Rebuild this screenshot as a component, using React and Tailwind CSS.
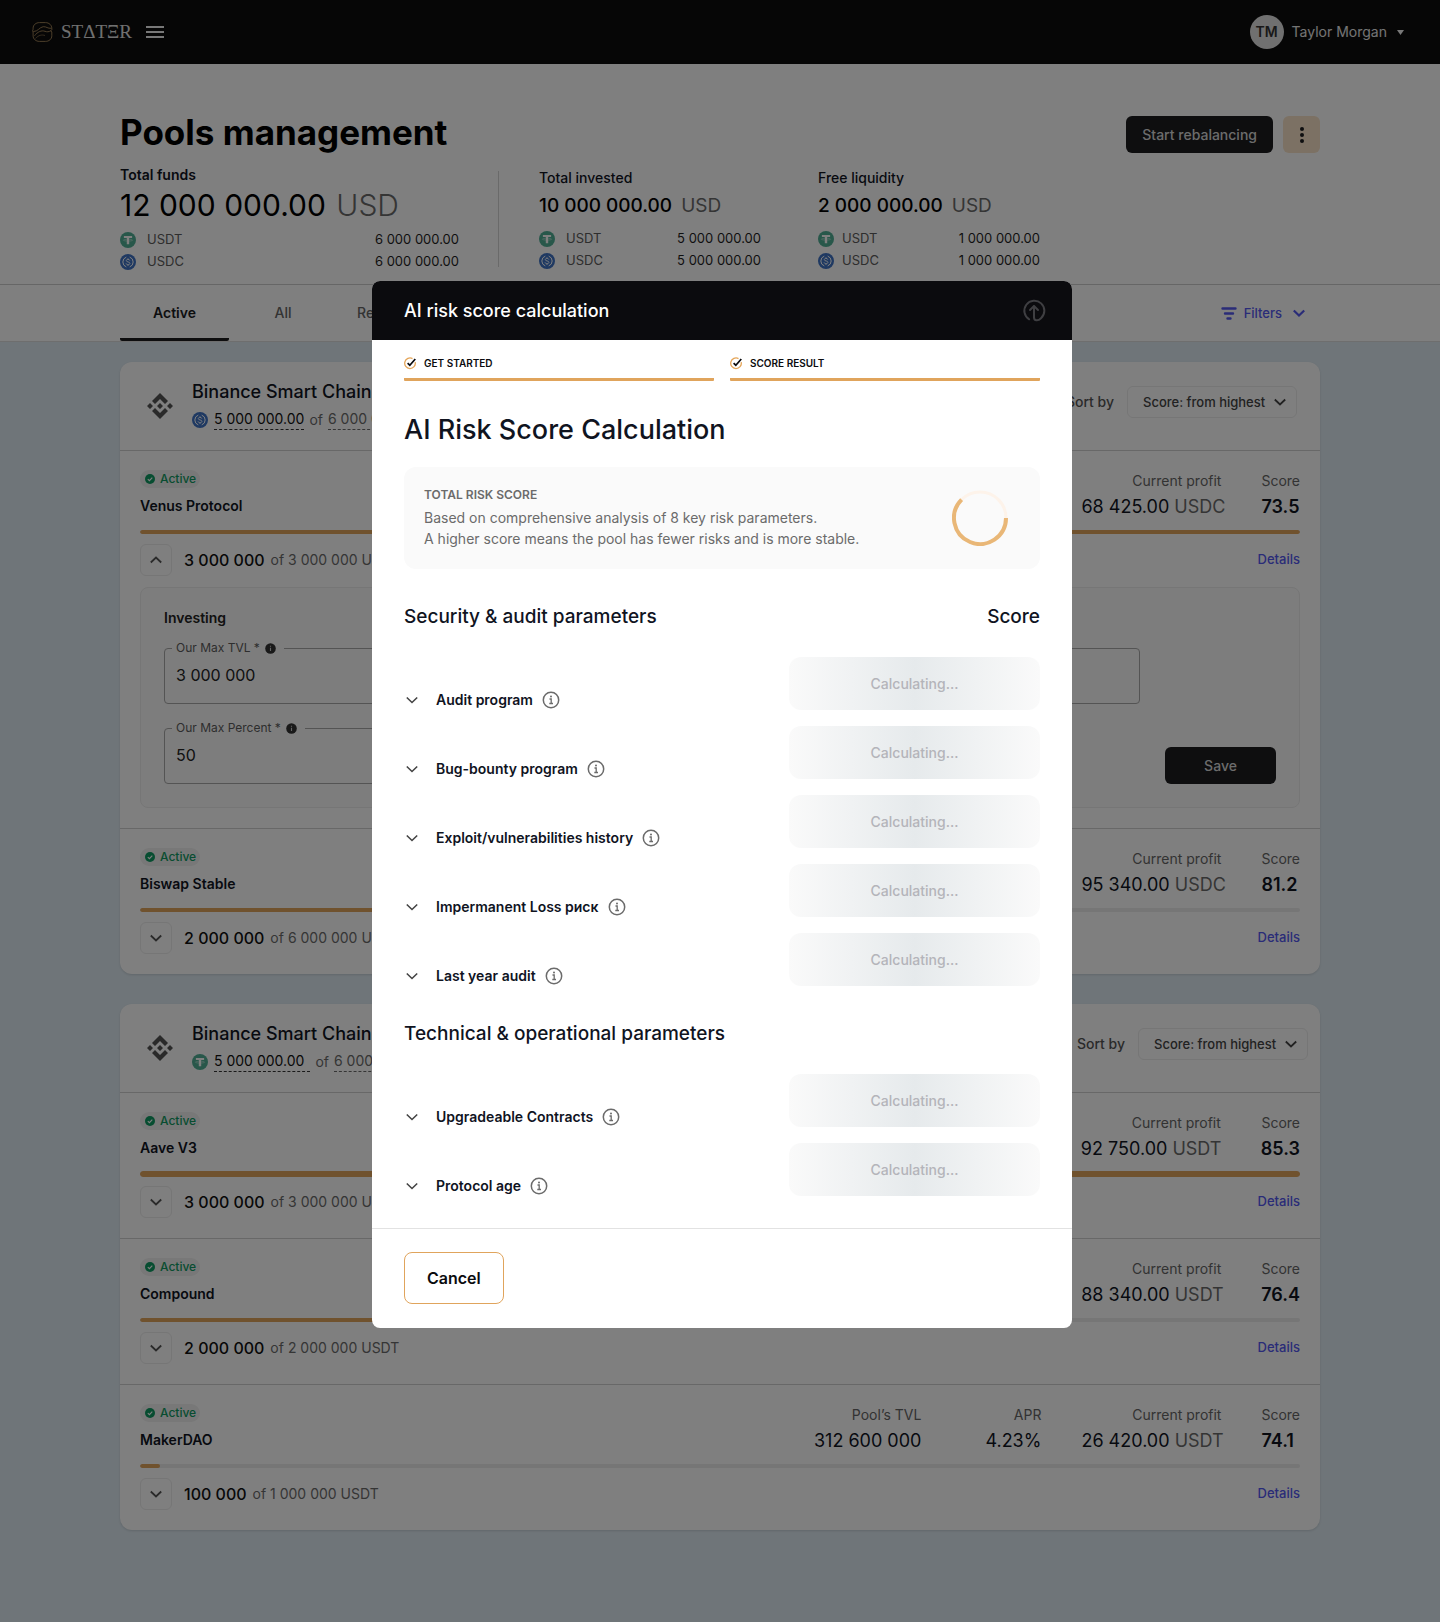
import React, { useState } from 'react';

// ---------- Icons ----------

const ChevronIcon = ({ size = 16, up = false, weight = 1.8, className = '' }) => (
  <svg width={size} height={size} viewBox="0 0 16 16" fill="none" className={className} aria-hidden="true">
    <path d={up ? 'M2.800 10.500 8 5.500l5.200 5' : 'M2.800 5.500l5.200 5 5.200-5'} stroke="currentColor" strokeWidth={weight} />
  </svg>
);

const UsdtIcon = () => (
  <svg width="16" height="16" viewBox="0 0 16 16" className="shrink-0" aria-hidden="true">
    <circle cx="8" cy="8" r="8" fill="#50af95" />
    <path d="M3.900 3.900h8.200v2.200H9.200v6.200H6.800V6.100H3.900z" fill="#fff" />
    <path d="M6.600 7.400c-1.900.1-3.200.4-3.200.8s1.900.9 4.600.9 4.600-.4 4.600-.9-1.300-.7-3.200-.8" stroke="#fff" strokeWidth=".4" fill="none" />
  </svg>
);

const UsdcIcon = () => (
  <svg width="16" height="16" viewBox="0 0 16 16" fill="none" className="shrink-0" aria-hidden="true">
    <circle cx="8" cy="8" r="8" fill="#3e73c4" />
    <path d="M6.300 3.100a5.200 5.200 0 0 0 0 9.800M9.700 3.100a5.200 5.200 0 0 1 0 9.800" stroke="#fff" />
    <path
      d="M9.800 6.600c-.1-.8-.8-1.200-1.800-1.200s-1.700.4-1.700 1.200c0 1.900 3.600.8 3.600 2.800 0 .8-.8 1.300-1.900 1.300s-1.800-.5-1.900-1.300M8 4.300v1.100M8 10.700v1.100"
      stroke="#fff"
      strokeWidth=".9"
    />
  </svg>
);

const BinanceIcon = () => (
  <svg width="26" height="26" viewBox="0 0 26 26" fill="#555" className="shrink-0" aria-hidden="true">
    <path d="M13 0 21 8l-3 3-5-5-5 5-3-3z" />
    <path d="M13 26 21 18l-3-3-5 5-5-5-3 3z" />
    <path d="M3 10l3 3-3 3-3-3zM23 10l3 3-3 3-3-3zM13 10l3 3-3 3-3-3z" />
  </svg>
);

const LogoIcon = () => (
  <svg width="21" height="20" viewBox="0 0 21 20" fill="none" stroke="#a98a5c" strokeWidth=".9" aria-hidden="true">
    <path d="M7.500.6h6c3.700 0 6.300 2.700 6.300 5.600v1.600l-1 1 1 1.200v3.800c0 3.300-2.800 5.600-6.300 5.600h-6c-3.800 0-6.400-2.500-6.400-5.600V10L.6 8.800l.5-1.500V6.200C1.100 3 3.800.6 7.500.6z" />
    <path d="M1.400 9.500c4.500.2 6-4.300 9.800-4.800 3.200-.3 4.300 2 8.300 1.600" />
    <path d="M2.500 13.800c3-4 7-5.800 10.500-4.500 2.300.8 3.500.6 6-.6" />
    <path d="M3.500 16.500c3-3.500 6.500-4 9.500-3" strokeWidth=".6" />
  </svg>
);

const InfoIcon = () => (
  <svg width="18" height="18" viewBox="0 0 18 18" fill="none" stroke="#6b6b6b" aria-hidden="true">
    <circle cx="9" cy="9" r="7.700" strokeWidth="1.500" />
    <path d="M7.500 8h1.700v4.500M7.300 12.500h3.700" strokeWidth="1.300" />
    <circle cx="9" cy="5.400" r="1" fill="#6b6b6b" stroke="none" />
  </svg>
);

const InfoDot = () => (
  <svg width="11" height="11" viewBox="0 0 11 11" aria-hidden="true">
    <circle cx="5.500" cy="5.500" r="5.300" fill="#333" />
    <path d="M5.500 4.800v3.200M5.500 2.700v1.100" stroke="#ccc" strokeWidth="1.100" />
  </svg>
);

const StepIcon = () => (
  <svg width="13" height="13" viewBox="0 0 13 13" fill="none" aria-hidden="true">
    <path d="M11.200 5.200A5.300 5.300 0 1 1 8.500 1.600" stroke="#e5a65a" strokeWidth="1.300" />
    <path d="M3.600 6.200l2.200 2L11.300 2" stroke="#0b0b0e" strokeWidth="1.700" />
  </svg>
);

const CollapseIcon = () => (
  <svg width="24" height="24" viewBox="0 0 24 24" fill="none" stroke="#3f3f42" strokeWidth="2" strokeLinecap="round" strokeLinejoin="round" aria-hidden="true">
    <path d="M7.200 20.300A10 10 0 1 1 19 19.200c-3 3.200-7 2.800-7-1V7.500" />
    <path d="M8 11l4-4 4 4" />
  </svg>
);

// ---------- Data ----------

const chains = [
  {
    id: 'bsc-usdc',
    token: 'USDC',
    used: '5 000 000.00',
    total: '6 000 000.00',
    pools: [
      { name: 'Venus Protocol', profit: '68 425.00', score: '73.5', filled: '3 000 000', limit: '3 000 000', progress: 100, open: true },
      { name: 'Biswap Stable', profit: '95 340.00', score: '81.2', filled: '2 000 000', limit: '6 000 000', progress: 33 }
    ]
  },
  {
    id: 'bsc-usdt',
    token: 'USDT',
    used: '5 000 000.00',
    total: '6 000 000.00',
    wide: true,
    pools: [
      { name: 'Aave V3', profit: '92 750.00', score: '85.3', filled: '3 000 000', limit: '3 000 000', progress: 100, thick: true },
      { name: 'Compound', profit: '88 340.00', score: '76.4', filled: '2 000 000', limit: '2 000 000', progress: 50 },
      { name: 'MakerDAO', tvl: '312 600 000', apr: '4.23%', profit: '26 420.00', score: '74.1', filled: '100 000', limit: '1 000 000', progress: 1.7 }
    ]
  }
];

const securityParams = [
  'Audit program',
  'Bug-bounty program',
  'Exploit/vulnerabilities history',
  'Impermanent Loss риск',
  'Last year audit'
];

const technicalParams = ['Upgradeable Contracts', 'Protocol age'];

// ---------- Page ----------

const TopBar = () => (
  <header className="flex h-16 items-center justify-between bg-[#0c0c0c] px-8 text-[#f5f5f5]">
    <div className="flex items-center">
      <a href="#home" className="flex items-center gap-2">
        <LogoIcon />
        <span className="font-['Liberation_Serif',serif] text-[19px] leading-6 text-[#e0e0e0]">STΔTΞR</span>
      </a>
      <button type="button" aria-label="Menu" className="ml-[14px] flex h-3 w-[18px] flex-col justify-between">
        <span className="h-[2px] w-full bg-[#f0f0f0]" />
        <span className="h-[2px] w-full bg-[#f0f0f0]" />
        <span className="h-[2px] w-full bg-[#f0f0f0]" />
      </button>
    </div>
    <button type="button" className="flex items-center text-sm">
      <span className="flex h-[34px] w-[34px] items-center justify-center rounded-full bg-[#e0e0e0] font-semibold text-[#333]">TM</span>
      <span className="ml-2 text-[#e8e8e8]">Taylor Morgan</span>
      <svg width="7" height="5" viewBox="0 0 7 5" fill="#f0f0f0" className="mr-1 ml-[10px]" aria-hidden="true">
        <path d="M0 0h7L3.500 5z" />
      </svg>
    </button>
  </header>
);

const TokenRow = ({ token, value, tight }) => (
  <div className={`flex h-[22px] items-center text-[13px] ${tight ? 'gap-2' : 'gap-[11px]'}`}>
    {token === 'USDT' ? <UsdtIcon /> : <UsdcIcon />}
    <span className="text-[#5c5c5c]">{token}</span>
    <span className="ml-auto text-[#1f1f1f]">{value}</span>
  </div>
);

const Stat = ({ label, value, each, tight }) => (
  <div className="w-[222px] pt-[3px]">
    <p className="text-sm font-medium text-[#10141f]">{label}</p>
    <p className="mt-1 mb-2 text-[19px] leading-7 font-medium text-black">
      {value} <span className="ml-1 font-normal text-[#6b6b6b]">USD</span>
    </p>
    <TokenRow token="USDT" value={each} tight={tight} />
    <TokenRow token="USDC" value={each} tight={tight} />
  </div>
);

const PageHead = () => (
  <section className="border-b border-[#ccc] bg-white px-8 pt-12 pb-[11px]">
    <div className="mx-auto max-w-[1200px]">
      <div className="flex items-end justify-between">
        <h1 className="text-[35px] leading-[41px] font-bold text-black">Pools management</h1>
        <div className="flex gap-[10px]">
          <button type="button" className="h-[37px] rounded-md bg-[#1c1c1f] px-4 text-sm font-medium text-[#d8d8d8]">
            Start rebalancing
          </button>
          <button type="button" aria-label="More" className="flex h-[37px] w-[37px] items-center justify-center rounded-md bg-[#f8e3c8]">
            <svg width="4" height="16" viewBox="0 0 4 16" fill="#1c1c1f" aria-hidden="true">
              <circle cx="2" cy="2" r="2" />
              <circle cx="2" cy="8" r="2" />
              <circle cx="2" cy="14" r="2" />
            </svg>
          </button>
        </div>
      </div>
      <div className="mt-3 flex">
        <div className="w-[339px]">
          <p className="text-sm font-semibold text-[#10141f]">Total funds</p>
          <p className="mb-1 text-[30px] leading-10 text-black">
            12 000 000.00 <span className="ml-[2px] font-light text-[#6b6b6b]">USD</span>
          </p>
          <TokenRow token="USDT" value="6 000 000.00" />
          <TokenRow token="USDC" value="6 000 000.00" />
        </div>
        <div className="my-[6px] mr-10 ml-[39px] border-l border-[#d5d5d5]" />
        <div className="flex gap-[57px]">
          <Stat label="Total invested" value="10 000 000.00" each="5 000 000.00" />
          <Stat label="Free liquidity" value="2 000 000.00" each="1 000 000.00" tight />
        </div>
      </div>
    </div>
  </section>
);

const Tabs = () => (
  <nav className="border-b border-[#ddd] bg-white px-8">
    <div className="mx-auto flex h-14 max-w-[1200px] text-sm font-medium text-[#666]">
      <button type="button" className="w-[109px] rounded-b-[2px] border-b-[3px] border-[#1c1c1f] pt-[3px] font-semibold text-[#1c1c1f]">Active</button>
      <button type="button" className="w-[108px]">All</button>
      <button type="button" className="px-5">Rebalanced</button>
      <button type="button" className="mr-[13px] ml-auto flex items-center gap-[7px] text-[13px] text-[#5458f0]">
        <svg width="16" height="13" viewBox="0 0 16 13" stroke="currentColor" strokeWidth="2.400" strokeLinecap="round" aria-hidden="true">
          <path d="M1.500 1.500h13M4 6.500h8M6.500 11.500h3" />
        </svg>
        Filters
        <ChevronIcon weight={2.2} className="ml-[2px]" />
      </button>
    </div>
  </nav>
);

const Metric = ({ label, className = '', children }) => (
  <div className={className}>
    <p className="text-right text-sm text-[#666]">{label}</p>
    <p className="mt-1 text-lg leading-6 whitespace-nowrap text-[#10141f]">{children}</p>
  </div>
);

const Field = ({ id, label, value, className = '' }) => (
  <fieldset className={`rounded-[4px] border border-[#a8a8a8] pb-4 ${className}`}>
    <legend className="ml-[7px] flex h-4 items-center gap-[5px] pr-2 pl-1">
      <label htmlFor={id} className="text-xs text-[#5c5c5c]">{label} *</label>
      <InfoDot />
    </legend>
    <input id={id} type="text" defaultValue={value} className="mt-[7px] block h-6 w-full bg-transparent px-[11px] text-base text-[#222] outline-none" />
  </fieldset>
);

const InvestingForm = () => (
  <form className="mt-[11px] rounded-lg border border-[#ececec] bg-[#fafafa] px-[23px] pt-5 pb-[23px]" onSubmit={(e) => e.preventDefault()}>
    <h4 className="mb-3 text-sm font-semibold text-[#222]">Investing</h4>
    <div className="mr-34 mb-4">
      <Field id="max-tvl" label="Our Max TVL" value="3 000 000" />
    </div>
    <div className="flex items-end justify-between">
      <Field id="max-percent" label="Our Max Percent" value="50" className="w-[476px]" />
      <button type="submit" className="h-[37px] w-[111px] rounded-md bg-[#1c1c1f] text-sm font-medium text-[#d8d8d8]">Save</button>
    </div>
  </form>
);

const PoolRow = ({ pool, token }) => {
  const [open, setOpen] = useState(Boolean(pool.open));

  return (
    <li className="border-t border-[#d0d0d0] px-5 pt-[19px] pb-5">
      <div className="flex items-start justify-between">
        <div>
          <span className="flex h-[18px] w-[60px] items-center gap-[5px] rounded-full bg-[#f0f0f0] pl-[5px] text-xs font-medium text-[#0f9a62]">
            <svg width="10" height="10" viewBox="0 0 10 10" fill="none" aria-hidden="true">
              <circle cx="5" cy="5" r="5" fill="#0f9a62" />
              <path d="M2.800 5.200l1.600 1.500 2.900-3.100" stroke="#fff" strokeWidth="1.100" />
            </svg>
            Active
          </span>
          <h3 className="mt-2 text-sm font-semibold text-[#10141f]">{pool.name}</h3>
        </div>
        <div className="flex gap-10 pt-px">
          {pool.tvl && <Metric label="Pool’s TVL">{pool.tvl}</Metric>}
          {pool.apr && <Metric label="APR" className="w-20 text-right">{pool.apr}</Metric>}
          <Metric label="Current profit" className="w-[140px]">
            {pool.profit} <span className="text-[#6b6b6b]">{token}</span>
          </Metric>
          <Metric label="Score">
            <span className="font-semibold">{pool.score}</span>
          </Metric>
        </div>
      </div>
      <div className="mt-[10px] flex h-[6px] items-center">
        <div className={`w-full overflow-hidden rounded-full bg-[#ececec] ${pool.thick ? 'h-[6px]' : 'h-1'}`}>
          <div className="h-full rounded-full bg-[#e0a45c]" style={{ width: `${pool.progress}%` }} />
        </div>
      </div>
      <div className="mt-[9px] flex items-center">
        <button
          type="button"
          aria-label={open ? 'Collapse' : 'Expand'}
          onClick={() => setOpen(!open)}
          className="flex h-8 w-8 items-center justify-center rounded-md border border-[#ececec] text-[#555]"
        >
          <ChevronIcon up={open} />
        </button>
        <span className="ml-3 text-base font-medium text-[#111]">{pool.filled}</span>
        <span className="ml-[6px] text-sm text-[#6b6b6b]">of {pool.limit} {token}</span>
        <a href="#details" className="ml-auto text-[13px] font-medium text-[#5458f0]">Details</a>
      </div>
      {open && <InvestingForm />}
    </li>
  );
};

const ChainCard = ({ chain }) => (
  <section className="overflow-hidden rounded-xl bg-white shadow-sm">
    <div className={`flex h-[88px] items-start pl-[27px] ${chain.wide ? 'pr-3' : 'pr-[23px]'}`}>
      <div className="flex h-full items-center">
        <BinanceIcon />
      </div>
      <div className="ml-[19px] pt-4">
        <h2 className="text-lg font-medium text-[#10141f]">Binance Smart Chain</h2>
        <p className="mt-[3px] flex items-center text-sm text-[#6b6b6b]">
          {chain.token === 'USDT' ? <UsdtIcon /> : <UsdcIcon />}
          <span className={`ml-[6px] border-b border-dashed border-[#333] text-[#111] ${chain.wide ? 'pr-[6px]' : ''}`}>{chain.used}</span>
          <span className="mx-[5px]">of</span>
          <span className="border-b border-dashed border-[#6b6b6b]">{chain.total}</span>
        </p>
      </div>
      <div className="ml-auto flex items-center pt-6 text-sm font-medium text-[#555]">
        <label htmlFor={`sort-${chain.id}`}>Sort by</label>
        <div className="relative ml-[13px]">
          <select id={`sort-${chain.id}`} className="h-8 w-[170px] appearance-none rounded-md border border-[#ececec] bg-white pl-[15px] text-[13px] text-[#444]">
            <option>Score: from highest</option>
          </select>
          <ChevronIcon className="pointer-events-none absolute top-2 right-[9px] text-[#444]" />
        </div>
      </div>
    </div>
    <ul>
      {chain.pools.map((pool) => (
        <PoolRow key={pool.name} pool={pool} token={chain.token} />
      ))}
    </ul>
  </section>
);

// ---------- Modal ----------

const Step = ({ label }) => (
  <li className="flex-1 rounded-[1px] border-b-[3px] border-[#e0a45c] pb-[7px]">
    <span className="flex h-4 items-center gap-[7px] text-[10px] font-semibold text-[#0b0b0e]">
      <StepIcon />
      {label}
    </span>
  </li>
);

const ParamList = ({ items }) => (
  <ul className="mt-[26px] space-y-4">
    {items.map((name) => (
      <li key={name} className="flex items-end justify-between">
        <div className="flex items-center">
          <button type="button" aria-label={`Show ${name}`} className="text-[#444]">
            <ChevronIcon weight={1.6} />
          </button>
          <span className="ml-4 text-sm font-semibold text-[#10141f]">{name}</span>
          <button type="button" aria-label={`About ${name}`} className="ml-[9px]">
            <InfoIcon />
          </button>
        </div>
        <div className="flex h-[53px] w-[251px] items-center justify-center rounded-xl bg-linear-to-r from-[#fafafa] via-[#e6eaec] to-[#fafafa] text-sm font-medium text-[#b4b4ba]">
          Calculating...
        </div>
      </li>
    ))}
  </ul>
);

const ScoreModal = () => (
  <div role="dialog" aria-labelledby="modal-title" className="ml-1 w-[700px] max-w-full overflow-hidden rounded-lg bg-white">
    <div className="flex h-[59px] items-center justify-between bg-[#0b0b0e] pr-[26px] pl-8">
      <h2 id="modal-title" className="text-lg font-medium text-white">AI risk score calculation</h2>
      <button type="button" aria-label="Collapse">
        <CollapseIcon />
      </button>
    </div>
    <div className="px-8 pt-[15px] pb-8">
      <ol className="flex gap-4">
        <Step label="GET STARTED" />
        <Step label="SCORE RESULT" />
      </ol>
      <h3 className="mt-[31px] text-[27px] leading-9 font-medium text-[#10141f]">AI Risk Score Calculation</h3>
      <div className="mt-[19px] flex h-[102px] items-center justify-between rounded-xl bg-[#fafafa] pr-8 pl-5">
        <div className="pb-[2px] text-[#6b6b6b]">
          <h4 className="mb-[2px] text-xs leading-5 font-semibold">TOTAL RISK SCORE</h4>
          <p className="text-sm leading-[21px]">
            Based on comprehensive analysis of 8 key risk parameters.
            <br />
            A higher score means the pool has fewer risks and is more stable.
          </p>
        </div>
        <svg width="56" height="56" viewBox="0 0 56 56" fill="none" strokeWidth="4" aria-hidden="true">
          <circle cx="28" cy="28" r="26" stroke="#fdf3ea" strokeWidth="3" />
          <path d="M54 28A26 26 0 1 1 9.600 9.600" stroke="#e9b777" />
        </svg>
      </div>
      <div className="mt-[34px] flex justify-between text-[19px] leading-7 font-medium text-[#10141f]">
        <h4>Security &amp; audit parameters</h4>
        <span>Score</span>
      </div>
      <ParamList items={securityParams} />
      <h4 className="mt-[34px] text-[19px] leading-7 font-medium text-[#10141f]">Technical &amp; operational parameters</h4>
      <ParamList items={technicalParams} />
    </div>
    <div className="border-t border-[#e2e2e2] px-8 pt-[23px] pb-6">
      <button type="button" className="h-[52px] rounded-lg border border-[#e0a45c] px-[22px] text-base font-semibold text-[#0b0b0e]">
        Cancel
      </button>
    </div>
  </div>
);

const App = () => (
  <div className="relative min-h-screen bg-[#dfebf3] font-['Inter',sans-serif]">
    <TopBar />
    <PageHead />
    <Tabs />
    <main className="px-8 pt-5 pb-[92px]">
      <div className="mx-auto max-w-[1200px] space-y-[30px]">
        {chains.map((chain) => (
          <ChainCard key={chain.id} chain={chain} />
        ))}
      </div>
    </main>
    <div className="absolute inset-0 flex items-start justify-center bg-black/50 pt-[281px]">
      <ScoreModal />
    </div>
  </div>
);

export default App;
